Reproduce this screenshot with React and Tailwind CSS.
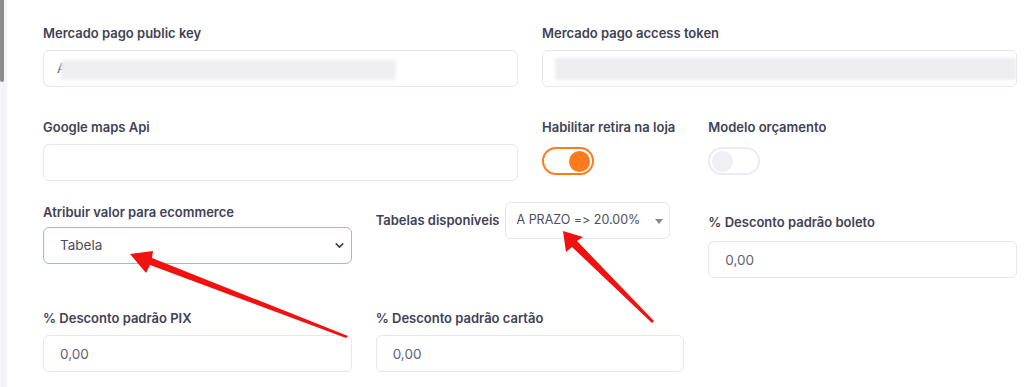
import React from 'react';
import { ChevronDown } from 'lucide-react';

const labelCls = 'block text-[13px] leading-4 font-semibold text-[#3f4254]';
const inputCls =
  'w-full h-[37px] rounded-md border border-[#e6e7ef] bg-white px-4 text-[13.5px] text-[#5e6278] outline-none';

function Field({ label, value, className = '', gap = 'mb-[9px]' }) {
  return (
    <div className={className}>
      <label className={`${labelCls} ${gap}`}>{label}</label>
      <input className={inputCls} defaultValue={value} />
    </div>
  );
}

function Toggle({ on }) {
  return (
    <div
      className={`mt-[12px] w-[52px] h-[28px] rounded-full border-2 flex items-center px-[2px] ${
        on ? 'border-[#ff7b1c] justify-end' : 'border-[#ebecf2] justify-start'
      }`}
    >
      <div className={`w-[21px] h-[21px] rounded-full ${on ? 'bg-[#ff7b1c]' : 'bg-[#f0f0f4]'}`} />
    </div>
  );
}

export default function App() {
  return (
    <div
      className="relative w-[1024px] h-[387px] overflow-hidden bg-[#f4f5f8] flex [font-feature-settings:'calt'_0,'liga'_0]"
      style={{ fontFamily: 'Inter, "Noto Sans", sans-serif' }}
    >
      {/* scrollbar strip */}
      <div className="w-[7px] shrink-0 relative">
        <div className="w-[4px] h-[82px] bg-[#8c8c8c] rounded-b-sm" />
      </div>

      <div className="flex-1 bg-white pl-[36px] pt-[25px]">
        <div className="w-[974px]">
          {/* row 1 */}
          <div className="grid grid-cols-6 gap-x-6">
            <div className="col-span-3">
              <label className={`${labelCls} mb-[9px]`}>Mercado pago public key</label>
              <div className="relative h-[37px] rounded-md border border-[#e6e7ef] bg-white flex items-center pl-[13px] overflow-hidden">
                <span className="text-[13.5px] text-[#5e6278]">A</span>
                <div className="absolute left-[17px] top-[9px] w-[335px] h-[20px] bg-[#efeff2] blur-[1.5px]" />
              </div>
            </div>
            <div className="col-span-3">
              <label className={`${labelCls} mb-[9px]`}>Mercado pago access token</label>
              <div className="relative h-[37px] rounded-md border border-[#e6e7ef] bg-white overflow-hidden">
                <div className="absolute left-[12px] top-[7px] right-0 h-[22px] bg-[#eeeef1] blur-[1.5px]" />
              </div>
            </div>
          </div>

          {/* row 2 */}
          <div className="grid grid-cols-6 gap-x-6 mt-[32px]">
            <Field className="col-span-3" label="Google maps Api" value="" />
            <div>
              <label className={labelCls}>Habilitar retira na loja</label>
              <Toggle on />
            </div>
            <div>
              <label className={labelCls}>Modelo orçamento</label>
              <Toggle />
            </div>
          </div>

          {/* row 3 */}
          <div className="grid grid-cols-6 gap-x-6 mt-[21px] items-start">
            <div className="col-span-2 pt-[2px]">
              <label className={`${labelCls} mb-[7px]`}>Atribuir valor para ecommerce</label>
              <div className="relative h-[37px] rounded-md border border-[#90bcf2] bg-white">
                <select
                  defaultValue="Tabela"
                  className="w-full h-full appearance-none border-0 bg-transparent pl-[16px] text-[13.5px] text-[#4b4d5c] outline-none"
                >
                  <option>Tabela</option>
                </select>
                <ChevronDown
                  className="absolute right-[5px] top-[11px] w-[13px] h-[13px] text-[#3f4254] pointer-events-none"
                  strokeWidth={3}
                />
              </div>
            </div>
            <div className="col-span-2 flex items-center gap-[5px]">
              <span className="text-[13px] font-semibold text-[#3f4254] whitespace-nowrap">Tabelas disponíveis</span>
              <div className="relative w-[165px] h-[37px] rounded-md border border-[#e6e7ef] bg-white flex items-center pl-[11px]">
                <span className="text-[12.5px] text-[#4b4d5c]">A PRAZO =&gt; 20.00%</span>
                <div className="absolute right-[6px] top-[16px] w-0 h-0 border-l-[4px] border-r-[4px] border-t-[5px] border-l-transparent border-r-transparent border-t-[#888]" />
              </div>
            </div>
            <Field className="col-span-2 pt-[12px]" gap="mb-[11px]" label="% Desconto padrão boleto" value="0,00" />
          </div>

          {/* row 4 */}
          <div className="grid grid-cols-6 gap-x-6 mt-[32px]">
            <Field className="col-span-2" label="% Desconto padrão PIX" value="0,00" />
            <Field className="col-span-2" label="% Desconto padrão cartão" value="0,00" />
          </div>
        </div>
      </div>

      {/* red annotation arrows */}
      <svg className="absolute inset-0 pointer-events-none" width="1024" height="387" viewBox="0 0 1024 387">
        <polygon
          points="348,336 346,338 150,265 146,273 130,254 153,251 152,258"
          fill="#f21111"
        />
        <polygon
          points="654,321 652,323 572,247 566,252 563,231 583,237 577,241"
          fill="#f21111"
        />
      </svg>
    </div>
  );
}
